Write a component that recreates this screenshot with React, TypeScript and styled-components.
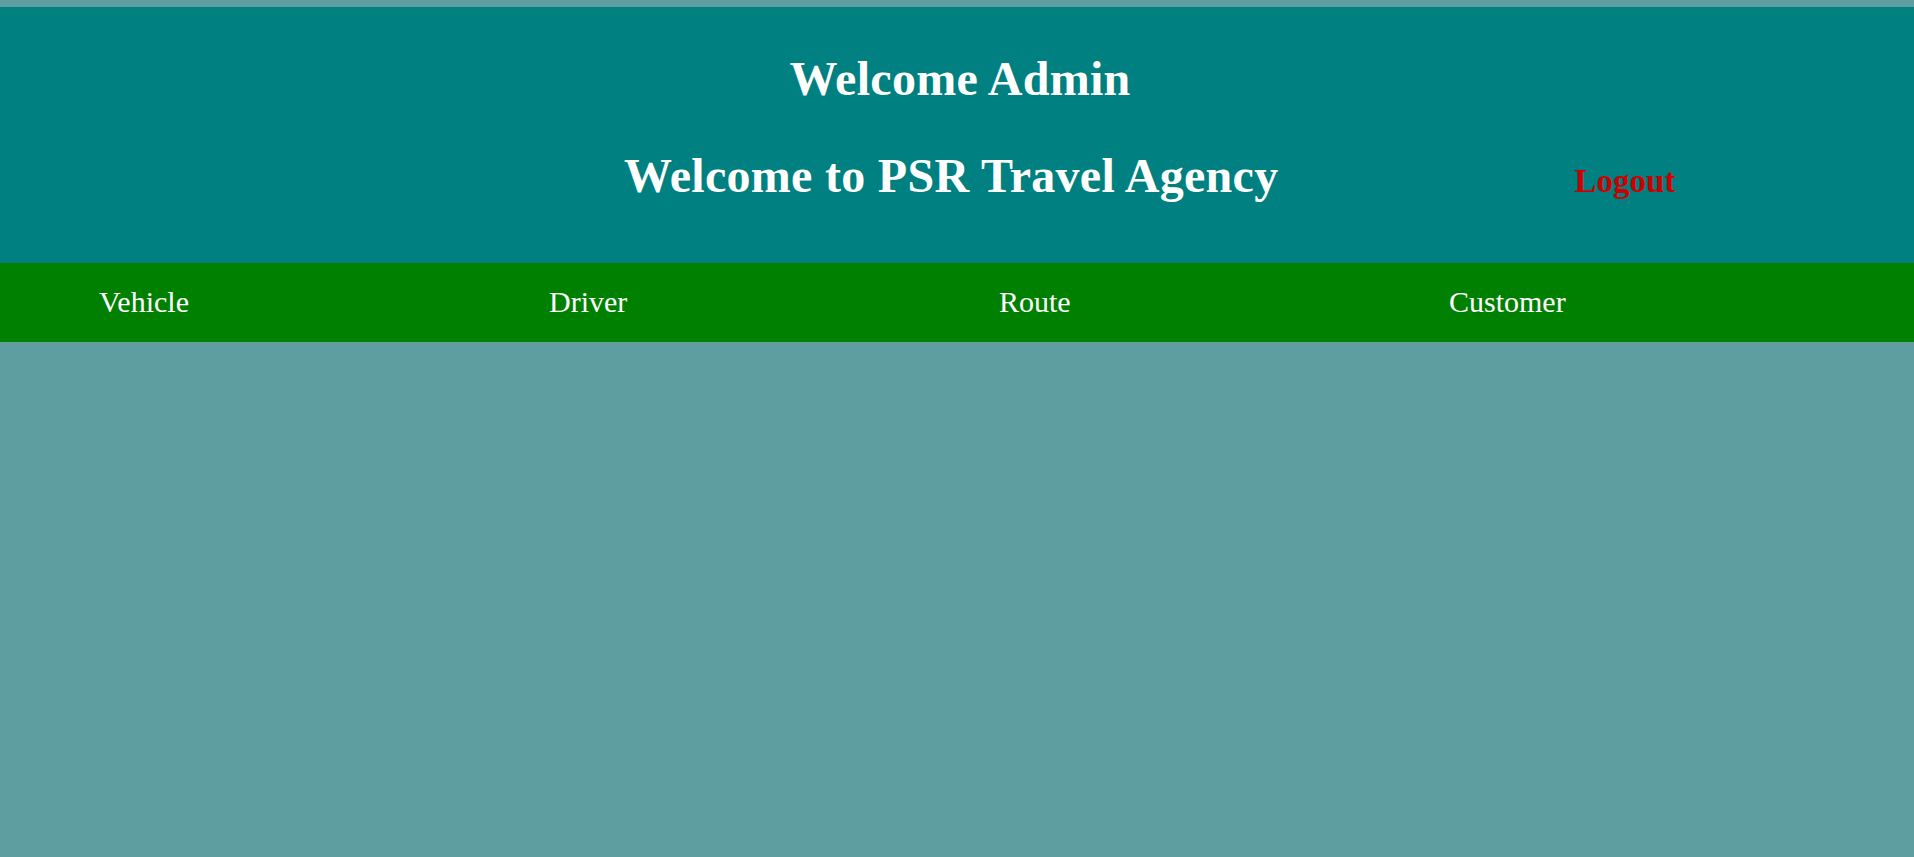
import React from "react";
import styled, { createGlobalStyle } from "styled-components";

const GlobalStyle = createGlobalStyle`
  html, body {
    margin: 0;
    padding: 0;
    background: #5f9ea0;
    font-family: "Liberation Serif", "Times New Roman", serif;
  }
  body {
    padding-top: 7px;
    min-height: 850px;
  }
`;

const Header = styled.header`
  background: #008080;
  height: 256px;
  box-sizing: border-box;
  padding-top: 45px;
  display: flex;
  flex-direction: column;
`;

const Title = styled.h1`
  margin: 0;
  font-size: 48px;
  font-weight: bold;
  color: #ffffff;
  line-height: 53px;
  letter-spacing: 0.3px;
  white-space: nowrap;
`;

const TopTitle = styled(Title)`
  text-align: center;
  padding-left: 6px;
`;

const TitleRow = styled.div`
  display: flex;
  align-items: baseline;
  margin-top: 44px;
  padding-left: 624px;
`;

const LogoutLink = styled.a`
  margin-left: 296px;
  font-size: 33px;
  font-weight: bold;
  color: #cc0000;
  text-decoration: none;
  cursor: pointer;
  white-space: nowrap;
`;

const Nav = styled.nav`
  background: #008000;
  height: 79px;
  display: flex;
  align-items: center;
  padding-left: 99px;
`;

const NavItem = styled.a`
  width: 450px;
  flex: none;
  font-size: 30px;
  color: #ffffff;
  text-decoration: none;
  line-height: 34px;
  margin-top: -2px;
  cursor: pointer;
`;

const items = ["Vehicle", "Driver", "Route", "Customer"];

export default function App() {
  return (
    <>
      <GlobalStyle />
      <Header>
        <TopTitle>Welcome Admin</TopTitle>
        <TitleRow>
          <Title>Welcome to PSR Travel Agency</Title>
          <LogoutLink>Logout</LogoutLink>
        </TitleRow>
      </Header>
      <Nav>
        {items.map((it) => (
          <NavItem key={it}>{it}</NavItem>
        ))}
      </Nav>
    </>
  );
}
